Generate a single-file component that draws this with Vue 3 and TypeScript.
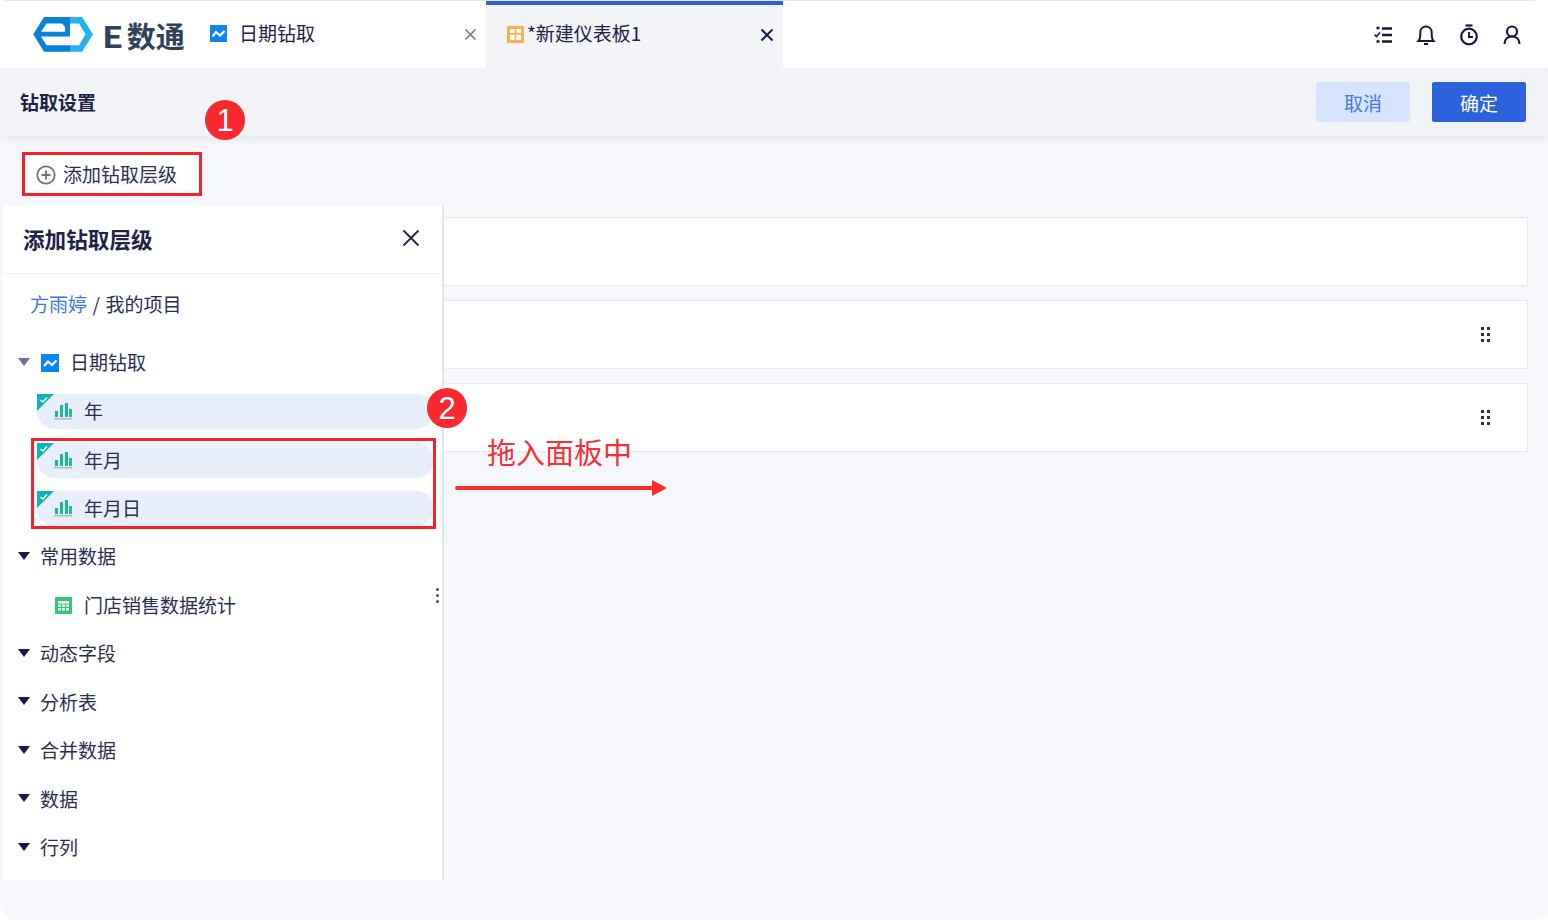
<script setup lang="ts">
interface TreeRow {
  label: string
  kind: 'group' | 'chart-group' | 'field' | 'table'
}
const rows: TreeRow[] = [
  { label: '日期钻取', kind: 'chart-group' },
  { label: '年', kind: 'field' },
  { label: '年月', kind: 'field' },
  { label: '年月日', kind: 'field' },
  { label: '常用数据', kind: 'group' },
  { label: '门店销售数据统计', kind: 'table' },
  { label: '动态字段', kind: 'group' },
  { label: '分析表', kind: 'group' },
  { label: '合并数据', kind: 'group' },
  { label: '数据', kind: 'group' },
  { label: '行列', kind: 'group' }
]
const cards = [false, true, true]
</script>

<template>
  <div class="app">
    <header class="topbar">
      <div class="brand">
        <svg class="logo" width="60" height="35" viewBox="0 0 60 35">
          <path d="M0.300 17.300L11 0H37V34.700H11Z" fill="#0a80d8" />
          <path d="M8 14.700L13.500 6.500H29L32 10V14.700Z" fill="#fff" />
          <path d="M8 19.500L13.500 28.300H37V19.500Z" fill="#fff" />
          <path d="M37 0H49L60 17.300L49 34.700H37V28.300H46L52.500 17.300L46 6.500H37Z" fill="#25b2ec" />
        </svg>
        <span class="brand-name"><span class="brand-e">E</span>数通</span>
      </div>
      <div class="tab">
        <svg class="tab-icon" width="17" height="17" viewBox="0 0 17 17">
          <rect width="17" height="17" fill="#0c85f0" />
          <path d="M2.500 11.500L6 7L10 10.500L14.500 6" stroke="#fff" stroke-width="2.200" fill="none" />
        </svg>
        <span class="tab-label">日期钻取</span>
        <svg class="tab-close" width="13" height="13" viewBox="0 0 13 13">
          <path d="M1.500 1.500L11.500 11.500M11.500 1.500L1.500 11.500" stroke="#73778c" stroke-width="1.600" />
        </svg>
      </div>
      <div class="tab tab-active">
        <svg class="tab-icon" width="17" height="17" viewBox="0 0 17 17">
          <rect width="17" height="17" fill="#fbb04a" />
          <rect x="3" y="3" width="4.700" height="4" fill="#fff" />
          <rect x="9.300" y="3" width="4.700" height="4" fill="#fff" />
          <rect x="3" y="8.600" width="4.700" height="5.400" fill="#fff" />
          <rect x="9.300" y="8.600" width="4.700" height="5.400" fill="#fff" />
        </svg>
        <span class="tab-label tab-label-tight">*新建仪表板1</span>
        <svg class="tab-close" width="14" height="14" viewBox="0 0 14 14">
          <path d="M1.500 1.500L12.500 12.500M12.500 1.500L1.500 12.500" stroke="#1a1f45" stroke-width="2" />
        </svg>
      </div>
      <div class="top-icons">
        <svg width="24" height="24" viewBox="0 0 24 24" fill="none" stroke="#14193f">
          <path d="M11 5.500H21M11 12H21M11 18.500H21" stroke-width="2.600" />
          <path d="M5.500 5H8.500M5.500 18.500H8.500" stroke-width="2.600" />
          <path d="M3.500 11.500L5.500 13.500L9 9.500" stroke-width="1.600" />
        </svg>
        <svg width="24" height="24" viewBox="0 0 24 24" fill="none" stroke="#14193f" stroke-width="2">
          <path d="M4.500 18C6 16.500 6.300 15 6.300 12V9.500C6.300 6 8.600 3.500 12 3.500S17.700 6 17.700 9.500V12C17.700 15 18 16.500 19.500 18Z" />
          <path d="M10 21H14" />
        </svg>
        <svg width="24" height="24" viewBox="0 0 24 24" fill="none" stroke="#14193f" stroke-width="2.200">
          <circle cx="12" cy="13.500" r="7.800" />
          <path d="M8.500 2.500H15.500" />
          <path d="M12 9V14H16" stroke-width="1.900" />
        </svg>
        <svg width="24" height="24" viewBox="0 0 24 24" fill="none" stroke="#14193f" stroke-width="2.200">
          <circle cx="12" cy="8.500" r="5" />
          <path d="M4.500 21C4.500 16.500 7.500 13.500 12 13.500S19.500 16.500 19.500 21" />
        </svg>
      </div>
    </header>

    <div class="toolbar">
      <span class="toolbar-title">钻取设置</span>
      <div class="actions">
        <button class="btn btn-light">取消</button>
        <button class="btn btn-primary">确定</button>
      </div>
    </div>

    <main class="content">
      <button class="add-btn">
        <svg width="20" height="20" viewBox="0 0 20 20" fill="none" stroke="#6d7187" stroke-width="1.800">
          <circle cx="10" cy="10" r="8.700" />
          <path d="M5.500 10H14.500M10 5.500V14.500" />
        </svg>
        <span>添加钻取层级</span>
      </button>
      <div class="cards">
        <div v-for="(hasGrip, i) in cards" :key="i" class="card">
          <svg v-if="hasGrip" width="9" height="16" viewBox="0 0 9 16" fill="#2b3056">
            <rect x="0" y="0" width="3" height="3" />
            <rect x="6" y="0" width="3" height="3" />
            <rect x="0" y="6" width="3" height="3" />
            <rect x="6" y="6" width="3" height="3" />
            <rect x="0" y="12" width="3" height="3" />
            <rect x="6" y="12" width="3" height="3" />
          </svg>
        </div>
      </div>
    </main>

    <aside class="panel">
      <div class="panel-head">
        <span class="panel-title">添加钻取层级</span>
        <svg width="18" height="18" viewBox="0 0 18 18">
          <path d="M1.500 1.500L16.500 16.500M16.500 1.500L1.500 16.500" stroke="#22274a" stroke-width="1.800" />
        </svg>
      </div>
      <div class="crumbs"><span class="crumb-link">方雨婷</span><span class="crumb-sep">/</span><span>我的项目</span></div>
      <ul class="tree">
        <li v-for="row in rows" :key="row.label" class="tree-row" :class="'row-' + row.kind">
          <template v-if="row.kind === 'group' || row.kind === 'chart-group'">
            <i class="caret" :class="{ 'caret-muted': row.kind === 'chart-group' }"></i>
            <svg v-if="row.kind === 'chart-group'" class="row-icon" width="18" height="18" viewBox="0 0 18 18">
              <rect width="18" height="18" fill="#0c85f0" />
              <path d="M3 12L7 7.500L11 11L15.500 6.500" stroke="#fff" stroke-width="2.200" fill="none" />
            </svg>
            <span class="row-text">{{ row.label }}</span>
          </template>
          <div v-else-if="row.kind === 'field'" class="pill">
            <svg class="corner" width="17" height="17" viewBox="0 0 17 17">
              <path d="M0 0H17L0 17Z" fill="#0fb1bd" />
              <path d="M3.500 6L5.800 8L10 3.500" stroke="#fff" stroke-width="1.500" fill="none" />
            </svg>
            <svg class="bars" width="18" height="17" viewBox="0 0 18 17">
              <rect x="1" y="8" width="3" height="6" fill="#0fb1bd" />
              <rect x="6" y="2" width="3" height="12" fill="#1fb78e" />
              <rect x="11" y="0" width="3" height="14" fill="#19b5a8" />
              <rect x="15" y="6" width="3" height="8" fill="#2fc272" />
              <rect x="0" y="15" width="18" height="1.500" fill="#b1b6ca" />
            </svg>
            <span class="pill-text">{{ row.label }}</span>
          </div>
          <div v-else class="table-row">
            <svg class="bars" width="17" height="17" viewBox="0 0 17 17">
              <rect width="17" height="17" fill="#2ecb74" />
              <rect x="3" y="4" width="11" height="2.500" fill="#fff" />
              <rect x="3" y="7.500" width="3" height="2.200" fill="#fff" />
              <rect x="7" y="7.500" width="3" height="2.200" fill="#fff" />
              <rect x="11" y="7.500" width="3" height="2.200" fill="#fff" />
              <rect x="3" y="11" width="3" height="2.500" fill="#fff" />
              <rect x="7" y="11" width="3" height="2.500" fill="#fff" />
              <rect x="11" y="11" width="3" height="2.500" fill="#fff" />
            </svg>
            <span class="pill-text">{{ row.label }}</span>
          </div>
        </li>
      </ul>
      <div class="resize-dots"><i></i><i></i><i></i></div>
    </aside>

    <div class="mark mark-add"></div>
    <div class="mark mark-items"></div>
    <div class="badge badge-one">1</div>
    <div class="badge badge-two">2</div>
    <div class="hint">拖入面板中</div>
    <div class="hint-arrow"></div>
  </div>
</template>

<style scoped>
.app {
  position: relative;
  width: 1548px;
  height: 920px;
  display: flex;
  flex-direction: column;
  overflow: hidden;
  background: #f6f7fa;
  border-radius: 6px 16px 12px 16px;
  font-family: "Noto Sans CJK SC", "Liberation Sans", sans-serif;
  font-size: 19px;
  color: #2a2f52;
}
.topbar {
  height: 68px;
  flex: none;
  display: flex;
  align-items: stretch;
  background: #fff;
  border-top: 1px solid #e9e9ec;
  box-sizing: border-box;
}
.brand {
  width: 202px;
  flex: none;
  box-sizing: border-box;
  padding-left: 33px;
  display: flex;
  align-items: center;
  gap: 9px;
}
.logo {
  flex: none;
}
.brand-name {
  font-size: 29px;
  font-weight: 700;
  color: #2f4257;
  letter-spacing: 0;
  white-space: nowrap;
  line-height: 36px;
}
.brand-e {
  display: inline-block;
  transform: scaleX(1.2);
  transform-origin: left center;
  margin-right: 7px;
}
.tab {
  width: 284px;
  flex: none;
  box-sizing: border-box;
  display: flex;
  align-items: center;
  padding: 0 9px 0 8px;
  color: #1d2246;
}
.tab-icon {
  margin-top: -2px;
}
.tab-active {
  width: 297px;
  padding: 0 9px 0 21px;
  background: #f2f4f8;
  border-top: 4px solid #2d62dc;
}
.tab-active .tab-icon,
.tab-active .tab-close {
  margin-top: -4px;
}
.tab-label {
  margin-left: 12px;
  flex: 1;
  line-height: 26px;
  margin-top: -4px;
}
.tab-active .tab-label {
  margin-top: -7px;
}
.tab-label-tight {
  margin-left: 3px;
}
.top-icons {
  margin-left: auto;
  display: flex;
  align-items: center;
  gap: 19px;
  padding-right: 24px;
}
.toolbar {
  height: 68px;
  flex: none;
  box-sizing: border-box;
  padding: 0 22px 0 20px;
  display: flex;
  align-items: center;
  justify-content: space-between;
  background: #f2f4f8;
  box-shadow: 0 3px 8px rgba(60, 70, 100, 0.08);
  position: relative;
}
.toolbar-title {
  font-weight: 700;
  color: #1d2246;
  margin-top: -2px;
}
.actions {
  display: flex;
  gap: 22px;
}
.btn {
  width: 94px;
  height: 40px;
  border: 0;
  border-radius: 2px;
  font: inherit;
  padding: 0;
}
.btn-light {
  background: #d6e4fd;
  color: #4a78dc;
}
.btn-primary {
  background: #2d62dc;
  color: #fff;
}
.content {
  flex: 1;
  padding: 18px 20px 0 24px;
}
.add-btn {
  width: 176px;
  height: 40px;
  box-sizing: border-box;
  background: #fff;
  border: 1px solid #e6e8ee;
  font: inherit;
  color: #2a2f52;
  display: flex;
  align-items: center;
  gap: 7px;
  padding: 0 0 0 11px;
}
.add-btn svg {
  margin-top: 2px;
}
.add-btn span {
  margin-top: -1px;
}
.cards {
  margin-top: 23px;
  display: flex;
  flex-direction: column;
  gap: 14px;
}
.card {
  height: 69px;
  box-sizing: border-box;
  background: #fff;
  border: 1px solid #e8eaee;
  display: flex;
  align-items: center;
  justify-content: flex-end;
  padding-right: 37px;
}
.panel {
  position: absolute;
  left: 3px;
  top: 205px;
  width: 441px;
  height: 675px;
  box-sizing: border-box;
  background: #fff;
  border-right: 2px solid #e3e5ee;
}
.panel-head {
  height: 69px;
  box-sizing: border-box;
  border-bottom: 1px solid #eceef2;
  display: flex;
  align-items: center;
  justify-content: space-between;
  padding: 0 22px 0 20px;
}
.panel-head svg {
  margin-top: -3px;
}
.panel-title {
  font-size: 21.600px;
  font-weight: 700;
  color: #1d2246;
  margin-top: -1px;
}
.crumbs {
  height: 65px;
  box-sizing: border-box;
  padding: 14px 0 0 27px;
  line-height: 32px;
}
.crumb-link {
  color: #3b74e6;
}
.crumb-sep {
  margin: 0 5.500px;
}
.tree {
  list-style: none;
  margin: 0;
  padding: 0;
  display: grid;
  grid-auto-rows: 48.500px;
}
.tree-row {
  display: flex;
  align-items: center;
  padding-left: 15px;
  position: relative;
}
.row-text {
  margin-top: -3px;
}
.pill-text {
  margin-top: -2px;
}
.caret {
  width: 0;
  height: 0;
  border-left: 6px solid transparent;
  border-right: 6px solid transparent;
  border-top: 8px solid #15193f;
  margin-right: 10px;
  margin-top: -3px;
}
.caret-muted {
  border-top-color: #6f7390;
  margin-right: 11px;
}
.row-icon {
  margin-right: 11px;
}
.pill {
  margin-left: 19px;
  width: 397px;
  height: 35px;
  background: #e8eefa;
  border-radius: 0 17.500px 17.500px 17.500px;
  position: relative;
  display: flex;
  align-items: center;
  box-sizing: border-box;
  padding-left: 17px;
}
.row-field .pill-text {
  margin-left: 12px;
}
.corner {
  position: absolute;
  left: 0;
  top: 0;
}
.table-row {
  margin-left: 37px;
  display: flex;
  align-items: center;
  gap: 12px;
}
.resize-dots {
  position: absolute;
  right: 3px;
  top: 383px;
  display: flex;
  flex-direction: column;
  gap: 3px;
}
.resize-dots i {
  display: block;
  width: 3px;
  height: 3px;
  border-radius: 50%;
  background: #4a4f70;
}
.mark {
  position: absolute;
  border: 3px solid #f5222d;
  box-sizing: border-box;
}
.mark-add {
  left: 22px;
  top: 152px;
  width: 180px;
  height: 44px;
}
.mark-items {
  left: 31px;
  top: 438px;
  width: 405px;
  height: 91px;
}
.badge {
  position: absolute;
  width: 40px;
  height: 40px;
  border-radius: 50%;
  background: #fa2830;
  color: #fff;
  font-family: "Liberation Sans", sans-serif;
  font-size: 31px;
  line-height: 41px;
  text-align: center;
}
.badge-one {
  left: 205px;
  top: 100px;
}
.badge-two {
  left: 427px;
  top: 388px;
}
.hint {
  position: absolute;
  left: 487px;
  top: 430px;
  font-size: 29px;
  line-height: 42px;
  color: #f92d33;
  text-shadow: 0 0 3px #fff, 0 0 3px #fff;
  white-space: nowrap;
}
.hint-arrow {
  position: absolute;
  left: 455px;
  top: 486px;
  width: 200px;
  height: 4px;
  border-radius: 2px;
  background: #f92d2f;
}
.hint-arrow::after {
  content: "";
  position: absolute;
  left: 197px;
  top: -6px;
  border-left: 15px solid #f92d2f;
  border-top: 8px solid transparent;
  border-bottom: 8px solid transparent;
}
</style>

<style>
html,
body {
  background: #ffffff;
}
</style>
